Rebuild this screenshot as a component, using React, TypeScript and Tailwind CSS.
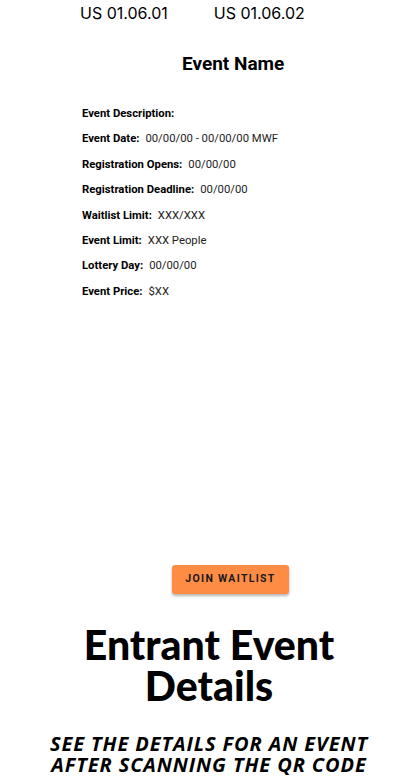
const rows: [string, string][] = [
  ["Event Description:", ""],
  ["Event Date:", "00/00/00 - 00/00/00 MWF"],
  ["Registration Opens:", "00/00/00"],
  ["Registration Deadline:", "00/00/00"],
  ["Waitlist Limit:", "XXX/XXX"],
  ["Event Limit:", "XXX People"],
  ["Lottery Day:", "00/00/00"],
  ["Event Price:", "$XX"],
];

export default function App() {
  return (
    <div className="flex h-[783px] w-[418px] flex-col overflow-hidden bg-white text-black">
      <div className="flex gap-[46px] pl-[80px] pt-[3px] font-['Inter',sans-serif] text-[16px] leading-[20px]">
        <span>US 01.06.01</span>
        <span>US 01.06.02</span>
      </div>

      <h1 className="mt-[30px] pl-[182px] font-['Roboto',sans-serif] text-[19px] font-bold leading-[22px]">Event Name</h1>

      <div className="mt-[31px] flex flex-col gap-[10.4px] pl-[82px] font-['Roboto',sans-serif] text-[11.3px] leading-[15px] text-[#222]">
        {rows.map(([label, value]) => (
          <p key={label}>
            <span className="font-bold text-black">{label}</span>
            {value ? <span className="ml-[6px]">{value}</span> : null}
          </p>
        ))}
      </div>

      <div className="mt-[266px] flex pl-[172px]">
        <button
          className="h-[29px] w-[117px] rounded-[3px] bg-[#ff8c45] font-['Roboto',sans-serif] text-[10.5px] font-bold tracking-[1.3px] text-[#1a1a1a] shadow-[0_2px_3px_rgba(0,0,0,0.3)]"
          type="button"
        >
          JOIN WAITLIST
        </button>
      </div>

      <h2 className="mt-[30px] text-center font-['Lato',sans-serif] text-[41px] font-black leading-[41px]">
        Entrant Event
        <br />
        Details
      </h2>

      <p className="mt-[27px] text-center font-['Open_Sans',sans-serif] text-[20px] font-bold italic leading-[21px] tracking-[0.9px]">
        SEE THE DETAILS FOR AN EVENT
        <br />
        AFTER SCANNING THE QR CODE
      </p>
    </div>
  );
}
